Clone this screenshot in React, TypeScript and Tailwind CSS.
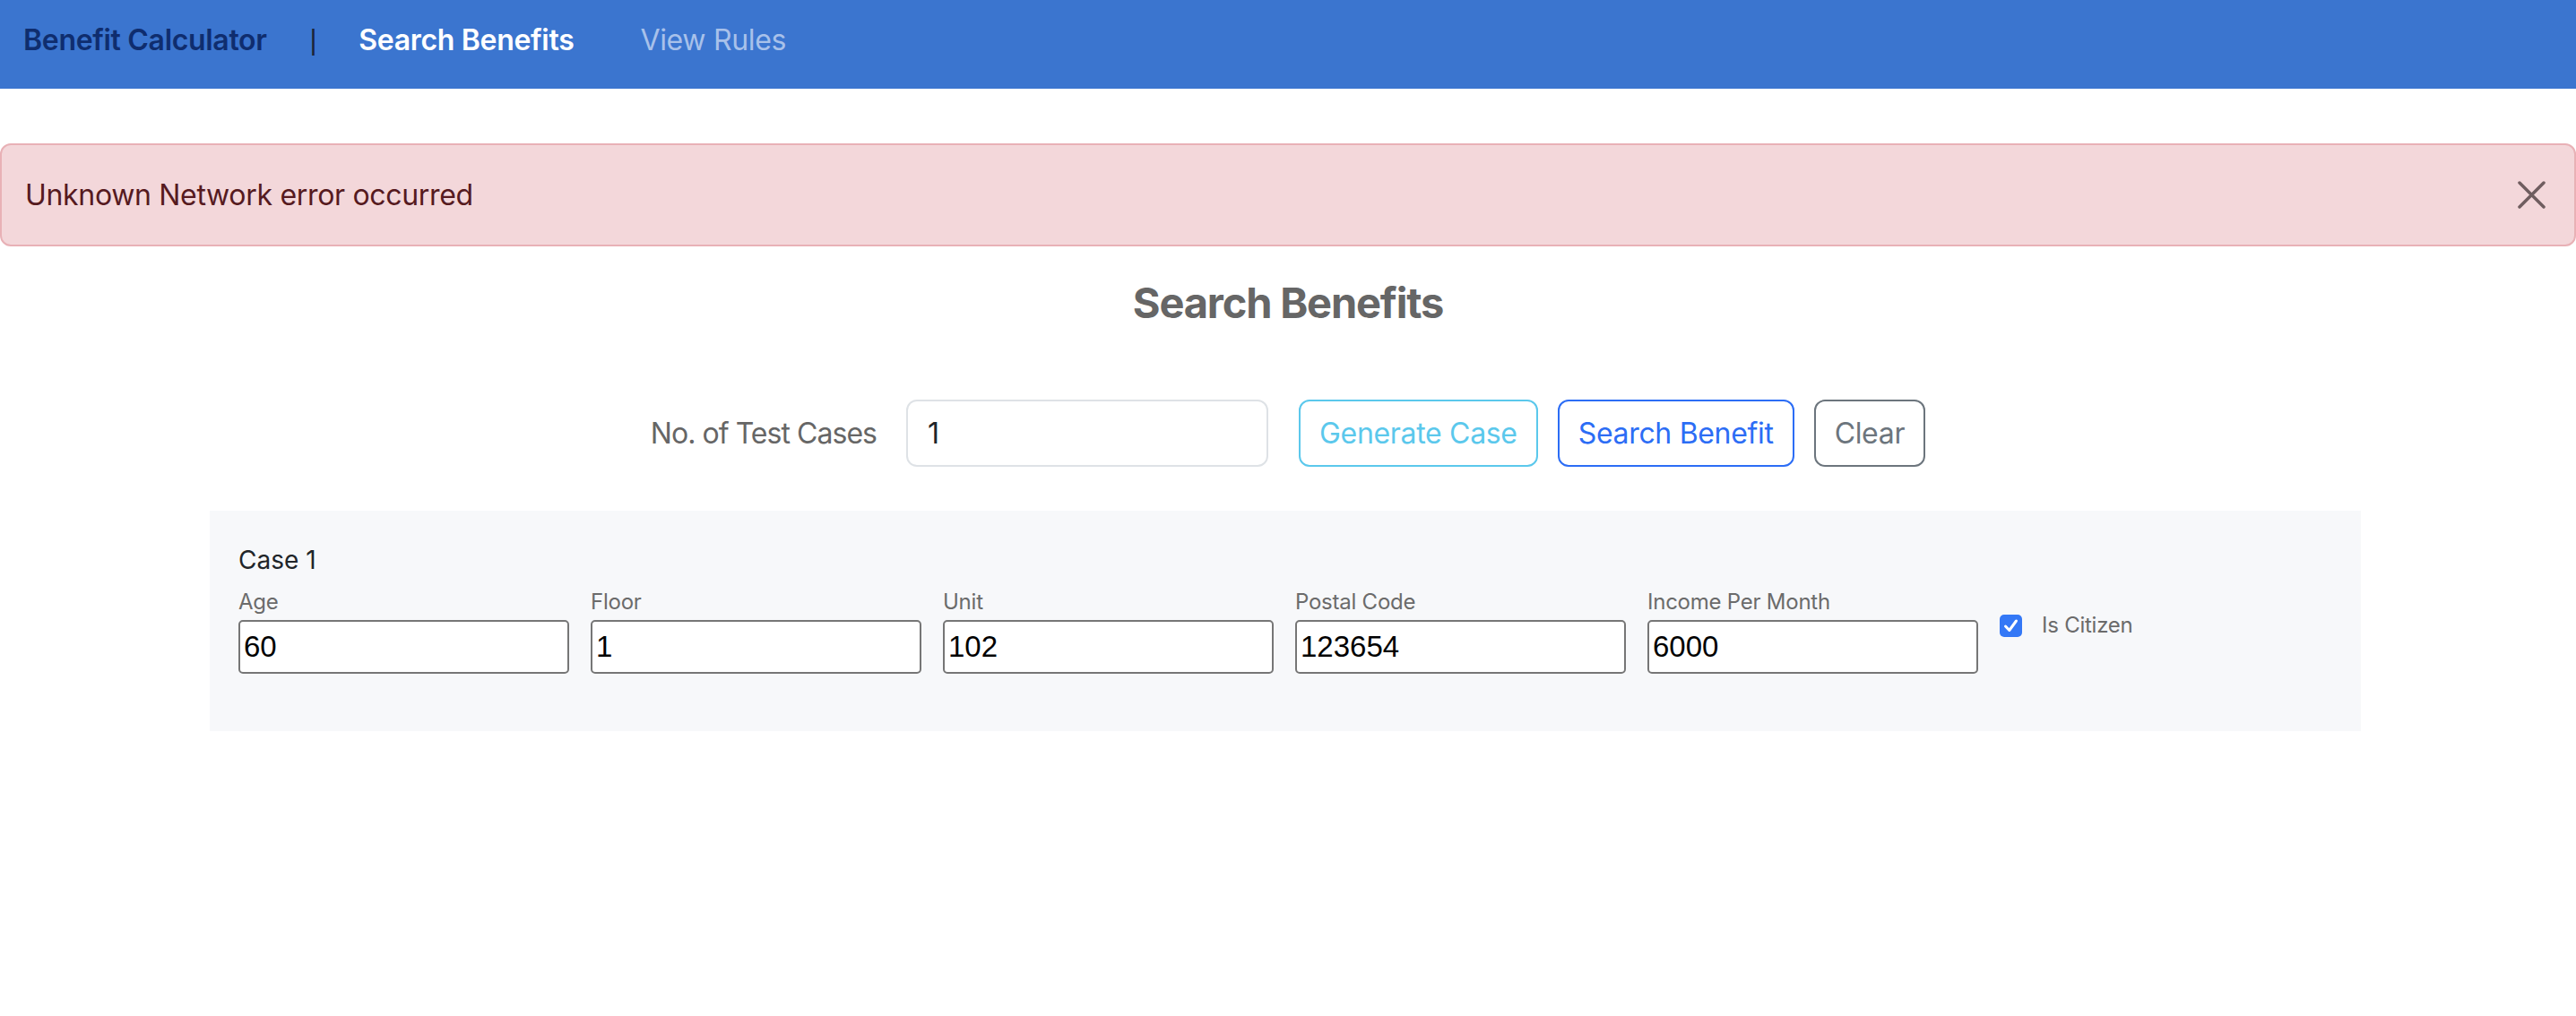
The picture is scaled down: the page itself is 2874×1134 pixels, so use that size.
import React from 'react';

const fields = [
  { label: 'Age', value: '60' },
  { label: 'Floor', value: '1' },
  { label: 'Unit', value: '102' },
  { label: 'Postal Code', value: '123654' },
  { label: 'Income Per Month', value: '6000' },
];

function CloseIcon() {
  return (
    <svg width="31" height="31" viewBox="0 0 31 31" fill="none">
      <path d="M2 2 L29 29 M29 2 L2 29" stroke="#6f5d5f" strokeWidth="3.5" strokeLinecap="round" />
    </svg>
  );
}

export default function App() {
  return (
    <div className="min-h-screen w-full bg-white font-['Inter',sans-serif]">
      {/* NAVBAR */}
      <nav className="flex h-[99px] items-start bg-[#3b75cf] pl-[26px] pt-[21px] leading-[48px] tracking-[-0.02em]">
        <span className="text-[32px] font-semibold text-[#0f2d6e]">Benefit Calculator</span>
        <span className="ml-[48px] font-['Liberation_Sans',sans-serif] text-[31px] text-[#1b2536]">|</span>
        <a className="ml-[47px] text-[32px] font-semibold text-white">Search Benefits</a>
        <a className="ml-[74px] text-[32px] text-[#a8c1ea]">View Rules</a>
      </nav>

      {/* ALERT */}
      <div className="mt-[61px] flex h-[115px] items-center justify-between rounded-[12px] border-2 border-[#e8b1b6] bg-[#f3d7da] pl-[26px] pr-[32px]">
        <span className="text-[32px] tracking-[-0.01em] text-[#561a1f]">Unknown Network error occurred</span>
        <CloseIcon />
      </div>

      {/* TITLE */}
      <h2 className="mt-[34px] text-center text-[47px] font-bold leading-[57px] tracking-[-0.025em] text-[#666666]">
        Search Benefits
      </h2>

      {/* CONTROLS */}
      <div className="mt-[80px] flex items-center justify-center tracking-[-0.02em]">
        <label className="text-[32px] tracking-[-0.03em] text-[#666666]">No. of Test Cases</label>
        <input
          readOnly
          value="1"
          className="ml-[33px] h-[75px] w-[404px] rounded-[12px] border-2 border-[#dee2e6] bg-white px-[22px] text-[32px] text-[#212529] outline-none"
        />
        <button className="ml-[34px] h-[75px] rounded-[12px] border-2 border-[#5bc8ec] px-[21px] text-[32px] text-[#5bc8ec]">
          Generate Case
        </button>
        <button className="ml-[22px] h-[75px] rounded-[12px] border-2 border-[#2c6df5] px-[21px] text-[32px] text-[#2c6df5]">
          Search Benefit
        </button>
        <button className="ml-[22px] h-[75px] rounded-[12px] border-2 border-[#6c757d] px-[21px] text-[32px] text-[#6c757d]">
          Clear
        </button>
      </div>

      {/* CASE CARD */}
      <div className="ml-[234px] mt-[49px] w-[2400px] bg-[#f7f8fa] pb-[64px] pl-[32px] pt-[34px]">
        <div className="text-[28px] leading-[42px] text-[#212529]">Case 1</div>
        <div className="mt-[8px] flex items-start gap-[24px]">
          {fields.map((f) => (
            <div key={f.label} className="flex w-[369px] flex-col">
              <span className="text-[24px] leading-[36px] tracking-[-0.01em] text-[#6b6b6b]">{f.label}</span>
              <input
                readOnly
                value={f.value}
                className="mt-[2px] h-[60px] w-[369px] rounded-[5px] border-2 border-[#767676] bg-white px-[4px] font-['Liberation_Sans',sans-serif] text-[33px] text-black outline-none"
              />
            </div>
          ))}
          <div className="mt-[31px] flex items-center gap-[22px]">
            <span className="flex h-[25px] w-[25px] items-center justify-center rounded-[5px] bg-[#3478f6]">
              <svg width="17" height="17" viewBox="0 0 17 17" fill="none">
                <path d="M2.5 9 L6.8 13.5 L14.5 3" stroke="white" strokeWidth="3" strokeLinecap="round" strokeLinejoin="round" />
              </svg>
            </span>
            <span className="text-[24px] leading-[26px] tracking-[-0.01em] text-[#6b6b6b]">Is Citizen</span>
          </div>
        </div>
      </div>
    </div>
  );
}
